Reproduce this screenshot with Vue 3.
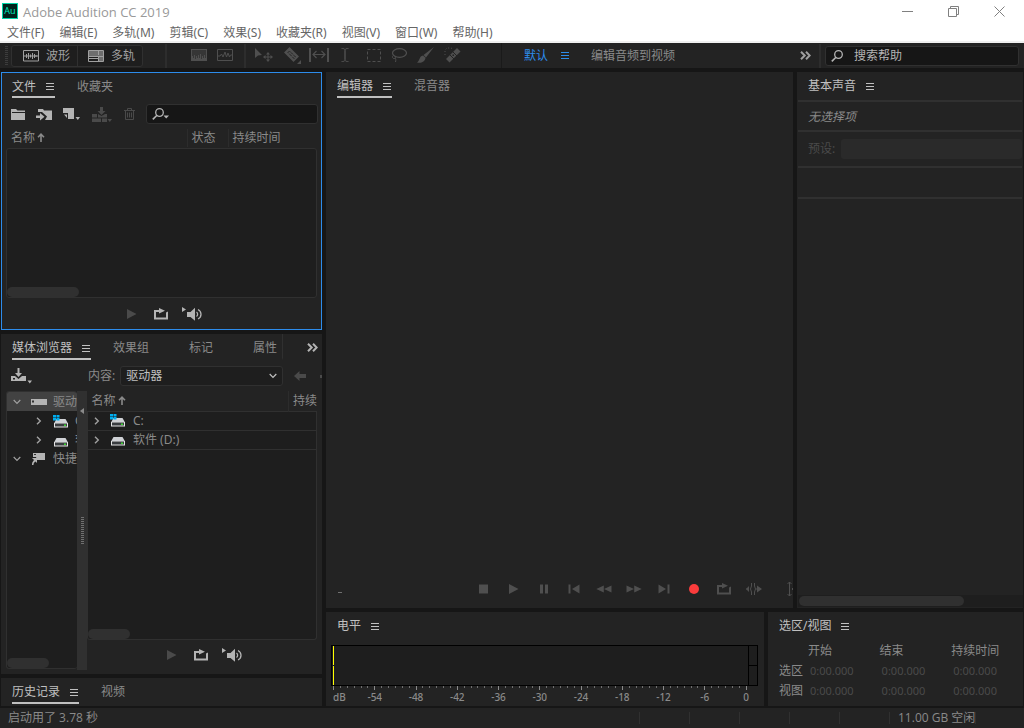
<script setup>
import { ref } from "vue";

const menus = [
  "文件(F)",
  "编辑(E)",
  "多轨(M)",
  "剪辑(C)",
  "效果(S)",
  "收藏夹(R)",
  "视图(V)",
  "窗口(W)",
  "帮助(H)",
];

const transport = [
  { icon: "stop", label: "停止" },
  { icon: "play", label: "播放" },
  { icon: "pause", label: "暂停" },
  { icon: "prev", label: "移到上一个" },
  { icon: "rewind", label: "快退" },
  { icon: "forward", label: "快进" },
  { icon: "next", label: "移到下一个" },
  { icon: "record", label: "录制" },
  { icon: "loop", label: "循环播放" },
  { icon: "skip", label: "跳过所选项目" },
];

const drives = [
  { icon: "drive-c", name: "C:" },
  { icon: "drive", name: "软件 (D:)" },
];

const timeRows = ["选区", "视图"];

/** 电平刻度：-60 到 0，每 6 dB 一个主刻度。 */
const ticks = Array.from({ length: 61 }, (_, i) => ({
  major: i % 6 === 0,
  label: i === 0 ? "dB" : String(i - 60),
}));

const helpQuery = ref("");
const fileQuery = ref("");
const source = ref("驱动器");
</script>

<template>
  <svg class="sprite">
    <symbol id="menu" viewBox="0 0 9 9"><path d="M0 1.5h8M0 4.5h8M0 7.5h8" stroke="currentColor" /></symbol>
    <symbol id="more" viewBox="0 0 11 9"><path d="M1 .8l3.7 3.7L1 8.200M6 .8l3.700 3.700L6 8.200" fill="none" stroke="currentColor" stroke-width="2" /></symbol>
    <symbol id="wave" viewBox="0 0 16 12">
      <path d="M.5.5h15v10.500H.5z" fill="none" stroke="currentColor" />
      <path d="M1 6h14M3.500 4v4M5.500 3v6M7.500 4.500v3M9.500 3v6M11.500 4v4M13 5v2" stroke="currentColor" />
    </symbol>
    <symbol id="tracks" viewBox="0 0 16 12">
      <path d="M1 1h14v10H1z" fill="#6e6e6e" />
      <path d="M1 7h9v4H1z" fill="#1e1e1e" />
      <path d="M.5.5h15v11H.5zM0 6.500h16M10.500 0v12M0 8.500h10" fill="none" stroke="currentColor" />
      <path d="M1 5.500h14" stroke="#6e6e6e" />
    </symbol>
    <symbol id="spectral" viewBox="0 0 16 12">
      <path d="M0 0h16v12H0z" fill="currentColor" />
      <path d="M1 1h14v8h-1V6h-1v3h-1V7h-1v3h-1V5H9v4H8V6H7v3H6V7H5v3H4V6H3v3H2V7H1z" fill="#363636" />
    </symbol>
    <symbol id="pitch" viewBox="0 0 16 12">
      <path d="M.5.5h15v11H.5z" fill="none" stroke="currentColor" />
      <path d="M1 7h2l1.500-2L6 8l2-5 1.500 5L11 4l1.500 4L13.500 6H15" fill="none" stroke="currentColor" />
    </symbol>
    <symbol id="move" viewBox="0 0 18 14">
      <path d="M0 0l7 7-4 .5L0 10zM13 4l2 2.500h-4zM13 14l2-2.500h-4zM8 9l2.500-2v4zM18 9l-2.500-2v4z" fill="currentColor" />
      <path d="M13 6v6M10 9h6" stroke="currentColor" />
    </symbol>
    <symbol id="razor" viewBox="0 0 19 17">
      <path d="M1 5.500L6.500 0 16 9.500 10.500 15z" fill="currentColor" />
      <path d="M5 5.500l1.500-1.500 6 6-1.500 1.500z" fill="none" stroke="#232323" stroke-dasharray="3 1" />
      <path d="M18 13v4h-4z" fill="currentColor" />
    </symbol>
    <symbol id="slip" viewBox="0 0 20 14">
      <path d="M1 0v14M19 0v14" stroke="currentColor" stroke-width="2" />
      <path d="M4 6.500h12M7.500 3L4 6.500 7.500 10M12.500 3L16 6.500 12.500 10" fill="none" stroke="currentColor" stroke-width="1.200" />
    </symbol>
    <symbol id="ibeam" viewBox="0 0 8 14"><path d="M.5.5c2 0 3.500 0 3.500 2v9c0 2-1.500 2-3.500 2M7.500.5C5.500.5 4 .5 4 2.500v9c0 2 1.500 2 3.500 2" fill="none" stroke="currentColor" /></symbol>
    <symbol id="marquee" viewBox="0 0 14 13"><path d="M.5.5h13v12H.5z" fill="none" stroke="currentColor" stroke-dasharray="3 2" /></symbol>
    <symbol id="lasso" viewBox="0 0 16 14">
      <ellipse cx="8.500" cy="5" rx="7" ry="4.300" fill="none" stroke="currentColor" stroke-width="1.200" />
      <path d="M2.500 7.500c-2 1-1 3 .5 3s2-1 1-2M4 10c1 1 1 2 .5 4" fill="none" stroke="currentColor" />
    </symbol>
    <symbol id="brush" viewBox="0 0 17 16">
      <path d="M17 0L9 10.500 6.500 8zM6 8.500l2.500 2.300C8 15 4 16.500 0 15.500 3 14 2 9 6 8.500z" fill="currentColor" />
    </symbol>
    <symbol id="heal" viewBox="0 0 17 16">
      <path d="M2 12L13 1l3.500 3.500L5.500 15.500z" fill="currentColor" />
      <path d="M5.500 7.500l5 5M8.500 4.500l4.500 4.500" stroke="#232323" />
      <path d="M8.500 7.500h1.500v1.500H8.500z" fill="#232323" />
      <path d="M1 8V3l2-2h4l2 1" fill="none" stroke="currentColor" stroke-dasharray="1 2" />
    </symbol>
    <symbol id="search" viewBox="0 0 13 12">
      <circle cx="7.500" cy="4.500" r="3.800" fill="none" stroke="currentColor" stroke-width="1.300" />
      <path d="M5 7.200L.8 11.400" stroke="currentColor" stroke-width="1.600" />
    </symbol>
    <symbol id="search-menu" viewBox="0 0 18 12">
      <circle cx="7.500" cy="4.500" r="3.800" fill="none" stroke="currentColor" stroke-width="1.300" />
      <path d="M5 7.200L.8 11.400" stroke="currentColor" stroke-width="1.600" />
      <path d="M11.500 7.500h5.500L14.200 10.500z" fill="currentColor" />
    </symbol>
    <symbol id="folder" viewBox="0 0 14 12"><path d="M0 1h5l1.500 1.500H14V4H1v1h13v7H0z" fill="currentColor" /></symbol>
    <symbol id="open" viewBox="0 0 16 13">
      <path d="M2 1h5l1 1.500h8V12H9l2-3.500L6 4H2z" fill="currentColor" />
      <path d="M0 7.500h4V5l4.500 3.700L4 12.500V10H0z" fill="currentColor" />
    </symbol>
    <symbol id="new" viewBox="0 0 17 12">
      <path d="M0 0h11v11H5V5H0z" fill="currentColor" />
      <path d="M1 6.500h3V10z" fill="currentColor" />
      <path d="M12.500 9H17l-2.200 3z" fill="currentColor" />
    </symbol>
    <symbol id="insert" viewBox="0 0 20 15">
      <path d="M0 7h6l3.500 2L13 7h2v8H0z" fill="currentColor" />
      <path d="M0 11h15M5.500 7v4M9.500 11v4" stroke="#232323" />
      <path d="M8 0h3v4h2.500L9.500 8 5.500 4H8z" fill="currentColor" />
      <path d="M15.500 12H20l-2.200 3z" fill="currentColor" />
    </symbol>
    <symbol id="trash" viewBox="0 0 11 12"><path d="M0 2.500h11M3.500 2V.5h4V2M1.500 3v8.500h8V3M3.500 4.500v5M5.500 4.500v5M7.500 4.500v5" fill="none" stroke="currentColor" /></symbol>
    <symbol id="sort" viewBox="0 0 8 9"><path d="M4 9V1M1 4.200l3-3 3 3" fill="none" stroke="currentColor" stroke-width="1.600" /></symbol>
    <symbol id="import" viewBox="0 0 22 16">
      <path d="M0 8h4l3.500 3L11 8h4v5H0z" fill="currentColor" />
      <path d="M2 10h2v1.500H2z" fill="#232323" />
      <path d="M6.500 0h2v5H11L7.500 9 4 5h2.500zM16.500 12.500h4.500L18.800 15.500z" fill="currentColor" />
    </symbol>
    <symbol id="back" viewBox="0 0 12 10"><path d="M0 5l5.500-5v3H12v4H5.500v3z" fill="currentColor" /></symbol>
    <symbol id="down" viewBox="0 0 8 6"><path d="M.7 1L4 4.300 7.300 1" fill="none" stroke="currentColor" stroke-width="1.200" /></symbol>
    <symbol id="right" viewBox="0 0 6 8"><path d="M1 .7L4.300 4 1 7.300" fill="none" stroke="currentColor" stroke-width="1.400" /></symbol>
    <symbol id="disk" viewBox="0 0 16 6">
      <path d="M0 0h16v6H0z" fill="#b4b4b4" />
      <path d="M1 1.500h2v2H1z" fill="#333" />
    </symbol>
    <symbol id="drive" viewBox="0 0 16 13">
      <path d="M3.500 4h9L15 8.500H1z" fill="#d0d2d6" />
      <path d="M1 8h14v4.500H1z" fill="#e4e4e4" />
      <path d="M2 8.500h12v3H2z" fill="#3a3d40" />
      <path d="M11 9.500h2v1.500h-2z" fill="#3ed632" />
    </symbol>
    <symbol id="drive-c" viewBox="0 0 16 13">
      <path d="M3.500 4h9L15 8.500H1z" fill="#d0d2d6" />
      <path d="M1 8h14v4.500H1z" fill="#e4e4e4" />
      <path d="M2 8.500h12v3H2z" fill="#3a3d40" />
      <path d="M11 9.500h2v1.500h-2z" fill="#3ed632" />
      <path d="M0 0h3v2.500H0zM3.500 0h3v2.500h-3zM0 3h3v2.500H0zM3.500 3h3v2.500h-3z" fill="#00adef" />
    </symbol>
    <symbol id="shortcut" viewBox="0 0 16 12">
      <path d="M2 0h12v7H6L5 4H2z" fill="#b4b4b4" />
      <path d="M3 1h2v1H3z" fill="#333" />
      <path d="M1 5h5v5L4.500 8.500C3 9.500 2.500 10.500 2.500 12H1c0-2 .5-3.500 2-5z" fill="#b4b4b4" />
    </symbol>
    <symbol id="stop" viewBox="0 0 16 12"><path d="M3 1.500h9v9H3z" fill="currentColor" /></symbol>
    <symbol id="play" viewBox="0 0 16 12"><path d="M3 1l9.500 5L3 11z" fill="currentColor" /></symbol>
    <symbol id="pause" viewBox="0 0 16 12"><path d="M4 1.500h3v9H4zM9 1.500h3v9H9z" fill="currentColor" /></symbol>
    <symbol id="prev" viewBox="0 0 16 12"><path d="M2.500 1.500h2v9h-2zM13.500 1.500v9L6 6z" fill="currentColor" /></symbol>
    <symbol id="next" viewBox="0 0 16 12"><path d="M11.500 1.500h2v9h-2zM2.500 1.500v9L10 6z" fill="currentColor" /></symbol>
    <symbol id="rewind" viewBox="0 0 16 12"><path d="M7.800 2.500v7L.3 6zM15.500 2.500v7L8 6z" fill="currentColor" /></symbol>
    <symbol id="forward" viewBox="0 0 16 12"><path d="M.5 2.500v7L8 6zM8.200 2.500v7L15.700 6z" fill="currentColor" /></symbol>
    <symbol id="record" viewBox="0 0 16 12"><circle cx="8" cy="6" r="5" fill="#fa3c3c" /></symbol>
    <symbol id="loop" viewBox="0 0 16 12"><path d="M1 2h5V0l6 2.800L6 5.500V4H3v5.500h10V4.500l2-1V11.500H1z" fill="currentColor" /></symbol>
    <symbol id="skip" viewBox="0 0 16 12">
      <path d="M0 6h3M10 6h3M5.500 0v3L4.500 6l1 3v3M8.500 0v3l1 3-1 3v3" fill="none" stroke="currentColor" />
      <path d="M3 3v6L0 6zM11 2.500L16 6l-5 3.500z" fill="currentColor" />
    </symbol>
    <symbol id="fit" viewBox="0 0 6 16"><path d="M2.500 1v14M.5 3l2-2 2 2M.5 13l2 2 2-2M5.500 7v2" fill="none" stroke="currentColor" /></symbol>
    <symbol id="speaker" viewBox="0 0 21 14">
      <path d="M0 0l4 2.500L0 5zM5 5h3.500L13 .8v13L8.500 10H5z" fill="currentColor" />
      <path d="M14.500 5c1.500 1 1.500 3.500 0 4.500M16 2.500c4 2 4 7.500 0 9.500" fill="none" stroke="currentColor" stroke-width="1.300" />
    </symbol>
  </svg>

  <div class="app">
    <header class="titlebar">
      <span class="logo">Au</span>
      <span class="title">Adobe Audition CC 2019</span>
      <div class="window-buttons">
        <button type="button" aria-label="最小化">
          <svg width="11" height="11" viewBox="0 0 11 11"><path d="M0 5.500h11" stroke="#808080" /></svg>
        </button>
        <button type="button" aria-label="还原">
          <svg width="11" height="11" viewBox="0 0 11 11"><path d="M.5 2.500h8v8h-8zM2.500 2V.5h8v8H9" fill="none" stroke="#808080" /></svg>
        </button>
        <button type="button" aria-label="关闭">
          <svg width="11" height="11" viewBox="0 0 11 11"><path d="M.5.5l10 10M10.500.5l-10 10" stroke="#808080" /></svg>
        </button>
      </div>
    </header>

    <nav class="menubar">
      <button v-for="item in menus" :key="item" type="button">{{ item }}</button>
    </nav>

    <div class="toolbar">
      <span class="grip"></span>
      <div class="modes">
        <button type="button"><svg width="16" height="12"><use href="#wave" /></svg>波形</button>
        <button type="button"><svg width="16" height="12"><use href="#tracks" /></svg>多轨</button>
      </div>
      <div class="tools views">
        <button type="button" aria-label="频谱频率显示"><svg width="16" height="12"><use href="#spectral" /></svg></button>
        <button type="button" aria-label="频谱音调显示"><svg width="16" height="12"><use href="#pitch" /></svg></button>
      </div>
      <div class="tools edit">
        <button type="button" aria-label="移动工具"><svg width="18" height="14"><use href="#move" /></svg></button>
        <button type="button" aria-label="切断工具"><svg width="19" height="17"><use href="#razor" /></svg></button>
        <button type="button" aria-label="滑动工具"><svg width="20" height="14"><use href="#slip" /></svg></button>
        <button type="button" aria-label="时间选择工具"><svg width="8" height="14"><use href="#ibeam" /></svg></button>
        <button type="button" aria-label="框选工具"><svg width="14" height="13"><use href="#marquee" /></svg></button>
        <button type="button" aria-label="套索选择工具"><svg width="16" height="14"><use href="#lasso" /></svg></button>
        <button type="button" aria-label="画笔选择工具"><svg width="17" height="16"><use href="#brush" /></svg></button>
        <button type="button" aria-label="污点修复画笔"><svg width="17" height="16"><use href="#heal" /></svg></button>
      </div>
      <div class="workspaces">
        <button type="button" class="is-current">默认<svg width="9" height="9"><use href="#menu" /></svg></button>
        <button type="button">编辑音频到视频</button>
        <button type="button" class="more" aria-label="更多工作区"><svg width="11" height="9"><use href="#more" /></svg></button>
      </div>
      <label class="help">
        <svg width="13" height="12"><use href="#search" /></svg>
        <input v-model="helpQuery" type="text" placeholder="搜索帮助" />
      </label>
    </div>

    <main class="workspace">
      <div class="side">
        <section class="panel files">
          <div class="tabs">
            <button type="button" class="tab is-active">文件<svg width="9" height="9"><use href="#menu" /></svg></button>
            <button type="button" class="tab">收藏夹</button>
          </div>
          <div class="file-tools">
            <button type="button" aria-label="打开文件"><svg width="14" height="12"><use href="#folder" /></svg></button>
            <button type="button" aria-label="导入文件"><svg width="16" height="13"><use href="#open" /></svg></button>
            <button type="button" aria-label="新建文件"><svg width="17" height="12"><use href="#new" /></svg></button>
            <button type="button" aria-label="插入到多轨" disabled><svg width="20" height="15"><use href="#insert" /></svg></button>
            <button type="button" aria-label="删除" disabled><svg width="11" height="12"><use href="#trash" /></svg></button>
            <label class="file-search">
              <svg width="18" height="12"><use href="#search-menu" /></svg>
              <input v-model="fileQuery" type="text" aria-label="搜索文件" />
            </label>
          </div>
          <table class="list files-list">
            <thead>
              <tr>
                <th>名称<svg width="8" height="9"><use href="#sort" /></svg></th>
                <th>状态</th>
                <th>持续时间</th>
              </tr>
            </thead>
          </table>
          <div class="list-body framed"><span class="thumb wide"></span></div>
          <div class="preview">
            <button type="button" aria-label="播放" disabled><svg width="16" height="12"><use href="#play" /></svg></button>
            <button type="button" aria-label="循环播放"><svg width="16" height="12"><use href="#loop" /></svg></button>
            <button type="button" aria-label="自动播放"><svg width="21" height="14"><use href="#speaker" /></svg></button>
          </div>
        </section>

        <section class="panel media">
          <div class="tabs">
            <button type="button" class="tab is-active">媒体浏览器<svg width="9" height="9"><use href="#menu" /></svg></button>
            <button type="button" class="tab">效果组</button>
            <button type="button" class="tab">标记</button>
            <button type="button" class="tab">属性</button>
            <button type="button" class="overflow" aria-label="更多面板"><svg width="11" height="9"><use href="#more" /></svg></button>
          </div>
          <div class="browse">
            <button type="button" aria-label="导入"><svg width="22" height="16"><use href="#import" /></svg></button>
            <label for="source">内容:</label>
            <div class="select">
              <select id="source" v-model="source">
                <option>驱动器</option>
                <option>快捷键</option>
              </select>
              <svg width="8" height="6"><use href="#down" /></svg>
            </div>
            <button type="button" class="back" aria-label="后退" disabled><svg width="12" height="10"><use href="#back" /></svg></button>
            <span class="cut"></span>
          </div>
          <div class="browser">
            <ul class="tree">
              <li class="is-selected">
                <svg class="arrow" width="8" height="6"><use href="#down" /></svg>
                <svg width="16" height="6"><use href="#disk" /></svg>驱动器
              </li>
              <li v-for="drive in drives" :key="drive.name" class="child">
                <svg class="arrow" width="6" height="8"><use href="#right" /></svg>
                <svg width="16" height="13"><use :href="`#${drive.icon}`" /></svg>{{ drive.name }}
              </li>
              <li>
                <svg class="arrow" width="8" height="6"><use href="#down" /></svg>
                <svg width="16" height="12"><use href="#shortcut" /></svg>快捷键
              </li>
              <li class="bar"><span class="thumb"></span></li>
            </ul>
            <div class="splitter">
              <svg width="4" height="6" viewBox="0 0 4 6"><path d="M4 0v6L0 3z" fill="#8a8a8a" /></svg>
              <span class="handle"></span>
            </div>
            <div class="contents">
              <table class="list drive-list">
                <thead>
                  <tr>
                    <th>名称<svg width="8" height="9"><use href="#sort" /></svg></th>
                    <th>持续时间</th>
                  </tr>
                </thead>
                <tbody>
                  <tr v-for="drive in drives" :key="drive.name">
                    <td colspan="2">
                      <div class="drive">
                        <svg width="6" height="8"><use href="#right" /></svg>
                        <svg width="16" height="13"><use :href="`#${drive.icon}`" /></svg>
                        {{ drive.name }}
                      </div>
                    </td>
                  </tr>
                </tbody>
              </table>
              <div class="list-body"><span class="thumb"></span></div>
              <div class="preview">
                <button type="button" aria-label="播放" disabled><svg width="16" height="12"><use href="#play" /></svg></button>
                <button type="button" aria-label="循环播放"><svg width="16" height="12"><use href="#loop" /></svg></button>
                <button type="button" aria-label="自动播放"><svg width="21" height="14"><use href="#speaker" /></svg></button>
              </div>
            </div>
          </div>
        </section>

        <section class="panel history">
          <div class="tabs">
            <button type="button" class="tab is-active">历史记录<svg width="9" height="9"><use href="#menu" /></svg></button>
            <button type="button" class="tab">视频</button>
          </div>
        </section>
      </div>

      <div class="center">
        <div class="upper">
          <section class="panel editor">
            <div class="tabs">
              <button type="button" class="tab is-active">编辑器<svg width="9" height="9"><use href="#menu" /></svg></button>
              <button type="button" class="tab">混音器</button>
            </div>
            <div class="transport">
              <span class="timecode"></span>
              <button
                v-for="item in transport"
                :key="item.icon"
                type="button"
                :aria-label="item.label"
              >
                <svg width="16" height="12"><use :href="`#${item.icon}`" /></svg>
              </button>
              <button type="button" class="fit" aria-label="缩放"><svg width="6" height="16"><use href="#fit" /></svg></button>
            </div>
          </section>

          <section class="panel sound">
            <div class="tabs">
              <button type="button" class="tab is-plain">基本声音<svg width="9" height="9"><use href="#menu" /></svg></button>
            </div>
            <p class="empty">无选择项</p>
            <div class="preset">
              <label for="preset">预设:</label>
              <select id="preset" disabled></select>
            </div>
            <div class="spacer"></div>
            <div class="scroll"><span></span></div>
          </section>
        </div>

        <div class="lower">
          <section class="panel levels">
            <div class="tabs">
              <button type="button" class="tab is-plain">电平<svg width="9" height="9"><use href="#menu" /></svg></button>
            </div>
            <div class="meter">
              <div class="bars"><span></span><span></span></div>
              <div class="clips"><span></span><span></span></div>
            </div>
            <div class="scale">
              <span v-for="tick in ticks" :key="tick.label" class="tick" :class="{ 'is-major': tick.major }">
                <b v-if="tick.major">{{ tick.label }}</b>
              </span>
            </div>
          </section>

          <section class="panel selection">
            <div class="tabs">
              <button type="button" class="tab is-plain">选区/视图<svg width="9" height="9"><use href="#menu" /></svg></button>
            </div>
            <table class="times">
              <thead>
                <tr>
                  <th></th>
                  <th>开始</th>
                  <th>结束</th>
                  <th>持续时间</th>
                </tr>
              </thead>
              <tbody>
                <tr v-for="row in timeRows" :key="row">
                  <th>{{ row }}</th>
                  <td>0:00.000</td>
                  <td>0:00.000</td>
                  <td>0:00.000</td>
                </tr>
              </tbody>
            </table>
          </section>
        </div>
      </div>
    </main>

    <footer class="status">
      <span class="message">启动用了 3.78 秒</span>
      <span v-for="n in 5" :key="n" class="cell"></span>
      <span class="cell space">11.00 GB 空闲</span>
      <span class="cell last"></span>
    </footer>
  </div>
</template>

<style>
body {
  margin: 0;
  background: #161616;
}
</style>

<style scoped>
.sprite {
  display: none;
}

.app {
  display: flex;
  flex-direction: column;
  min-height: 100vh;
  background: #161616;
  color: #8a8a8a;
  font: 12px/18px "Noto Sans", "Noto Sans CJK SC", sans-serif;
  overflow: hidden;
}

.app *,
.app {
  box-sizing: border-box;
}

button,
input,
select {
  padding: 0;
  border: none;
  background: none;
  color: inherit;
  font: inherit;
  outline: none;
}

button {
  display: flex;
  align-items: center;
  white-space: nowrap;
}

svg {
  flex: none;
}

.titlebar {
  display: flex;
  align-items: center;
  height: 22px;
  padding-left: 2px;
  background: #ffffff;
  color: #999999;
}

.logo {
  width: 16px;
  height: 16px;
  border: 1px solid #00d5a8;
  background: #00231c;
  color: #00e4bb;
  font-size: 9px;
  line-height: 14px;
  text-align: center;
}

.title {
  margin-left: 5px;
  padding-top: 1px;
  font-family: "Open Sans", "Noto Sans", sans-serif;
  font-size: 13px;
}

.window-buttons {
  display: flex;
  margin: 0 2px 0 auto;
}

.window-buttons button {
  justify-content: center;
  width: 46px;
  height: 20px;
}

.menubar {
  display: flex;
  gap: 15px;
  height: 21px;
  padding: 2px 7px 0;
  border-bottom: 2px solid #f0f0f0;
  background: #ffffff;
  color: #666666;
}

.toolbar {
  display: flex;
  align-items: center;
  height: 25px;
  padding-left: 5px;
  background: #232323;
}

.grip {
  width: 3px;
  height: 20px;
  margin-right: 3px;
  background: repeating-linear-gradient(#3c3c3c 0 1px, #232323 1px 2px);
}

.modes {
  display: flex;
  height: 22px;
  margin-right: 22px;
  border: 1px solid #303030;
  border-radius: 3px;
  background: #1e1e1e;
  color: #a0a0a0;
}

.modes button {
  gap: 7px;
  padding: 0 7px 0 11px;
}

.modes button + button {
  padding-left: 10px;
  border-left: 1px solid #303030;
}

.tools {
  display: flex;
  align-items: center;
  height: 24px;
  padding-bottom: 1px;
  border-left: 2px solid #2d2d2d;
  color: #4f4f4f;
}

.views {
  gap: 10px;
  padding: 0 11px 1px 24px;
}

.edit {
  gap: 10px;
  padding: 0 40px 1px 9px;
}

.edit button:nth-child(3) {
  margin: 0 2px 0 -3px;
}

.edit button:nth-child(4) {
  margin-right: 8px;
}

.workspaces {
  display: flex;
  flex: 1;
  align-items: center;
  height: 100%;
  gap: 21px;
  padding: 0 10px 0 22px;
  border-left: 1px solid #1a1a1a;
}

.workspaces .is-current {
  gap: 13px;
  color: #2d8ceb;
}

.workspaces .more {
  margin-left: auto;
  color: #a0a0a0;
}

.help {
  display: flex;
  flex: 0 1 194px;
  align-items: center;
  gap: 10px;
  min-width: 0;
  height: 20px;
  margin: 0 5px 0 4px;
  padding: 1px 5px 0;
  border: 1px solid #303030;
  border-radius: 3px;
  background: #161616;
  color: #b4b4b4;
}

.help::before {
  content: "";
  flex: none;
  width: 2px;
  height: 24px;
  margin: 0 0 0 -12px;
  background: #2d2d2d;
}

.help input,
.file-search input {
  flex: 1;
  min-width: 0;
}

.help input::placeholder {
  color: #b4b4b4;
}

.workspace {
  display: flex;
  flex: 1;
  gap: 4px;
  padding: 4px 1px 2px;
}

.side,
.center {
  display: flex;
  flex-direction: column;
  gap: 4px;
  min-width: 0;
}

.side {
  flex: 321 1 0;
}

.center {
  flex: 697 1 0;
}

.upper,
.lower {
  display: flex;
  gap: 4px;
}

.upper {
  flex: 1;
}

.panel {
  display: flex;
  flex-direction: column;
  min-width: 0;
  min-height: min-content;
  background: #232323;
  overflow: hidden;
}

.tabs {
  display: flex;
  flex: none;
  align-items: flex-start;
  gap: 22px;
  height: 28px;
  padding-left: 11px;
}

.tab {
  height: 26px;
  padding: 4px 18px 0 0;
  border-bottom: 2px solid transparent;
}

.tab.is-active,
.tab.is-plain {
  gap: 10px;
  padding-right: 0;
  color: #c0c0c0;
}

.tab.is-active {
  border-bottom-color: #c0c0c0;
}

.files {
  flex: 256 1 0;
  border: 1px solid #2d8ceb;
}

.files .tabs {
  height: 27px;
  padding-left: 10px;
}

.files .tab {
  height: 25px;
}

.file-tools {
  display: flex;
  align-items: center;
  gap: 11px;
  height: 28px;
  padding: 0 3px 0 9px;
  color: #b4b4b4;
}

.file-tools button:nth-child(3),
.file-tools button:nth-child(4) {
  margin-right: 1px;
}

button:disabled {
  color: #4a4a4a;
}

.file-search {
  display: flex;
  flex: 1;
  align-items: center;
  min-width: 0;
  height: 20px;
  padding: 0 5px;
  border: 1px solid #303030;
  border-radius: 3px;
  background: #161616;
}

.list {
  border-collapse: collapse;
  table-layout: fixed;
}

.list th {
  height: 18px;
  padding: 0 0 0 4px;
  border-left: 1px solid #2c2c2c;
  font-weight: 400;
  line-height: 18px;
  text-align: left;
  white-space: nowrap;
  overflow: hidden;
}

.list th:first-child {
  border-left: none;
}

.list th svg {
  margin-left: 2px;
}

.files-list {
  margin: 1px 5px;
}

.files-list th:nth-child(2) {
  width: 41px;
}

.files-list th:nth-child(3) {
  width: 88px;
}

.list-body {
  display: flex;
  flex: 1;
  align-items: flex-end;
  min-height: 40px;
  border: solid #303030;
  border-width: 0 1px 1px;
  border-radius: 0 0 3px 3px;
  background: #1e1e1e;
}

.framed {
  margin: 0 4px;
  border-width: 1px;
  border-radius: 3px;
}

.thumb {
  width: 42px;
  height: 10px;
  border-radius: 5px;
  background: #303030;
}

.thumb.wide {
  width: 72px;
}

.preview {
  display: flex;
  align-items: center;
  justify-content: center;
  gap: 13px;
  height: 31px;
  padding-left: 3px;
  color: #b4b4b4;
}

.media {
  flex: 340 1 0;
}

.media .tabs {
  padding-right: 4px;
}

.media .tab:nth-child(4) {
  padding-right: 5px;
  border-right: 1px solid #303030;
}

.overflow {
  height: 26px;
  margin-left: auto;
  color: #b4b4b4;
}

.browse {
  display: flex;
  align-items: center;
  height: 28px;
  padding-left: 10px;
}

.browse > button:first-child {
  margin-right: 55px;
  color: #b4b4b4;
}

.browse label {
  margin-right: 5px;
  white-space: nowrap;
}

.select {
  display: flex;
  flex: 1;
  align-items: center;
  height: 20px;
  padding-right: 5px;
  border: 1px solid #303030;
  border-radius: 3px;
  background: #1e1e1e;
  color: #c0c0c0;
}

.select select {
  flex: 1;
  min-width: 0;
  padding-left: 5px;
  appearance: none;
}

.browse .back {
  margin: 0 14px 0 11px;
}

.cut {
  width: 2px;
  height: 3px;
  background: #4a4a4a;
}

.browser {
  display: flex;
  flex: 1;
  padding: 1px 5px 4px;
}

.tree {
  display: flex;
  flex: 0 0 71px;
  flex-direction: column;
  margin: 0 0 1px;
  padding: 0;
  border: solid #303030;
  border-width: 1px 0 1px 1px;
  border-radius: 3px;
  background: #1e1e1e;
  list-style: none;
  overflow: hidden;
}

.tree li {
  display: flex;
  align-items: center;
  gap: 6px;
  height: 19px;
  padding: 1px 0 0 6px;
  white-space: nowrap;
}

.arrow {
  margin-right: 4px;
  color: #a0a0a0;
}

.tree .child {
  padding-left: 29px;
}

.tree .child .arrow {
  margin-right: 5px;
}

.tree .is-selected {
  background: #424242;
}

.tree .bar {
  flex: 1;
  align-items: flex-end;
  padding: 0;
}

.splitter {
  display: flex;
  flex: 0 0 10px;
  flex-direction: column;
  align-items: center;
  padding: 17px 0 23px;
  background: #303030;
}

.handle {
  width: 3px;
  height: 27px;
  margin: auto 0;
  background: repeating-linear-gradient(#707070 0 1px, #303030 1px 2px);
}

.contents {
  display: flex;
  flex: 1;
  flex-direction: column;
  min-width: 0;
}

.contents .preview {
  height: 30px;
}

.drive-list {
  width: 100%;
}

.drive-list th {
  height: 20px;
}

.drive-list th:nth-child(2) {
  width: 28px;
}

.drive-list td {
  height: 19px;
  padding: 0;
  border: 1px solid #303030;
  background: #1e1e1e;
}

.drive {
  display: flex;
  align-items: center;
  gap: 7px;
  padding-left: 6px;
}

.drive svg:first-child {
  margin-right: 3px;
  color: #a0a0a0;
}

.editor {
  flex: 467 1 0;
  justify-content: space-between;
}

.sound {
  flex: 226 1 0;
}

.transport {
  display: flex;
  align-items: center;
  justify-content: flex-end;
  height: 38px;
  color: #4f4f4f;
}

.transport button {
  justify-content: center;
  width: 30px;
  height: 30px;
}

.timecode {
  width: 4px;
  height: 1px;
  margin: 6px auto 0 12px;
  background: #707070;
}

.transport .fit {
  width: 24px;
  justify-content: flex-end;
}

.empty,
.preset {
  margin: 0 1px;
  border-top: 2px solid #303030;
}

.empty {
  height: 30px;
  padding-left: 10px;
  font-style: italic;
  line-height: 30px;
}

.preset {
  display: flex;
  align-items: center;
  height: 36px;
  gap: 6px;
  padding-left: 10px;
  color: #4a4a4a;
}

.preset label {
  white-space: nowrap;
}

.preset select {
  flex: 1;
  height: 20px;
  border-radius: 3px;
  background: #2a2a2a;
  opacity: 1;
  appearance: none;
}

.spacer {
  height: 33px;
  margin: 0 1px;
  border: solid #303030;
  border-width: 2px 0;
}

.scroll {
  margin: auto 0 1px 1px;
  padding: 1px;
  background: #1e1e1e;
}

.scroll span {
  display: block;
  width: 74%;
  height: 10px;
  border-radius: 5px;
  background: #303030;
}

.levels {
  flex: 438 1 0;
  height: 94px;
}

.selection {
  flex: 255 1 0;
}

.meter {
  display: flex;
  height: 41px;
  margin: 5px 6px 0 5px;
  border: 1px solid #000000;
  background: #1e1e1e;
}

.bars,
.clips {
  display: flex;
  flex-direction: column;
}

.bars {
  flex: 1;
  gap: 1px;
  padding-left: 1px;
}

.bars span {
  flex: 1;
  width: 1px;
  background: #ffff00;
}

.clips {
  width: 9px;
  border-left: 1px solid #000000;
}

.clips span {
  flex: 1;
}

.clips span + span {
  border-top: 1px solid #000000;
}

.scale {
  display: flex;
  justify-content: space-between;
  margin: 0 17px 0 7px;
}

.tick {
  display: flex;
  justify-content: center;
  width: 1px;
  height: 2px;
  background: #707070;
}

.tick.is-major {
  height: 4px;
  background: #8a8a8a;
}

.tick b {
  padding-top: 4px;
  font-size: 10px;
  font-weight: 500;
  line-height: 14px;
}

.tick:first-child {
  justify-content: flex-start;
}

.times {
  margin: 1px 0 0 11px;
  border-collapse: collapse;
  table-layout: fixed;
}

.times th,
.times td {
  height: 20px;
  padding: 0;
  font-weight: 400;
  line-height: 20px;
  text-align: left;
  white-space: nowrap;
}

.times thead th {
  width: 72px;
}

.times thead th:first-child {
  width: 29px;
}

.times td {
  padding-left: 2px;
  color: #4a4a4a;
  font-size: 11px;
}

.status {
  display: flex;
  align-items: center;
  height: 20px;
  padding-left: 8px;
  background: #232323;
  font-family: "Open Sans", "Noto Sans CJK SC", sans-serif;
}

.message {
  margin-right: auto;
}

.cell {
  width: 50px;
  height: 12px;
  border-left: 1px solid #303030;
  white-space: nowrap;
}

.cell.space {
  display: flex;
  align-items: center;
  width: 86px;
  padding-left: 8px;
}

.cell.last {
  width: 49px;
}

@media (max-width: 760px) {
  .workspaces button:nth-child(2) {
    display: none;
  }
}
</style>
